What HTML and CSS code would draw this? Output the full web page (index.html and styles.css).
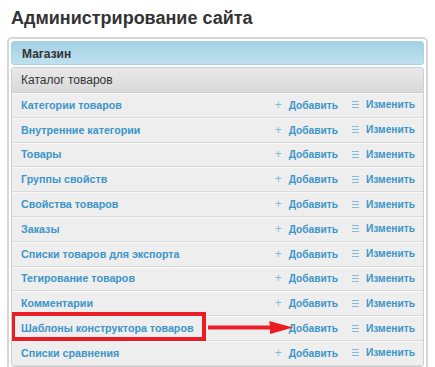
FILE: index.html
```html
<!DOCTYPE html>
<html lang="ru">
<head>
    <meta charset="UTF-8">
    <title>Администрирование сайта</title>
    <link rel="stylesheet" href="styles.css">
</head>
<body>
    <h1 class="page-title">Администрирование сайта</h1>
    <div class="panel">
        <div class="section-head">Магазин</div>
        <div class="group">
            <div class="group-head">Каталог товаров</div>
            <div class="row"><a class="name">Категории товаров</a><span class="acts"><a class="add">Добавить</a><a class="edit">Изменить</a></span></div>
            <div class="row"><a class="name">Внутренние категории</a><span class="acts"><a class="add">Добавить</a><a class="edit">Изменить</a></span></div>
            <div class="row"><a class="name">Товары</a><span class="acts"><a class="add">Добавить</a><a class="edit">Изменить</a></span></div>
            <div class="row"><a class="name">Группы свойств</a><span class="acts"><a class="add">Добавить</a><a class="edit">Изменить</a></span></div>
            <div class="row"><a class="name">Свойства товаров</a><span class="acts"><a class="add">Добавить</a><a class="edit">Изменить</a></span></div>
            <div class="row"><a class="name">Заказы</a><span class="acts"><a class="add">Добавить</a><a class="edit">Изменить</a></span></div>
            <div class="row"><a class="name">Списки товаров для экспорта</a><span class="acts"><a class="add">Добавить</a><a class="edit">Изменить</a></span></div>
            <div class="row"><a class="name">Тегирование товаров</a><span class="acts"><a class="add">Добавить</a><a class="edit">Изменить</a></span></div>
            <div class="row"><a class="name">Комментарии</a><span class="acts"><a class="add">Добавить</a><a class="edit">Изменить</a></span></div>
            <div class="row marked"><a class="name">Шаблоны конструктора товаров</a><span class="acts"><a class="add">Добавить</a><a class="edit">Изменить</a></span>
                <span class="red-box"></span>
                <svg class="red-arrow" width="90" height="16" viewBox="0 0 90 16">
                    <path d="M0 5.5 L62 5.5 L61 1 L85 7.5 L62 14 L62 9.5 L0 9.5 Z" fill="#ec1c24"/>
                </svg>
            </div>
            <div class="row"><a class="name">Списки сравнения</a><span class="acts"><a class="add">Добавить</a><a class="edit">Изменить</a></span></div>
        </div>
    </div>
</body>
</html>
```

FILE: styles.css
```css
body {
    margin: 0;
    font-family: "Liberation Sans", Arial, sans-serif;
    background: #fff;
    color: #333;
}

.page-title {
    font-size: 18px;
    font-weight: bold;
    color: #333;
    margin: 8px 11px 8px;
    line-height: 21px;
}

.panel {
    margin: 0 7px;
    border: 2px solid #d6d6d6;
    border-radius: 5px;
    padding: 2px;
    height: 400px;
}

.section-head {
    height: 24px;
    line-height: 24px;
    padding-left: 10px;
    font-size: 12px;
    font-weight: bold;
    color: #333;
    background: linear-gradient(#a3d1e4, #bfe1ef);
    border: 1px solid #a9d3e3;
    border-radius: 3px;
    box-sizing: border-box;
    margin-bottom: 2px;
}

.group {
    border: 1px solid #cfcfcf;
    border-radius: 3px;
    overflow: hidden;
}

.group-head {
    height: 24px;
    line-height: 24px;
    padding-left: 9px;
    font-size: 12px;
    color: #333;
    background: linear-gradient(#e9e9e9, #d9d9d9);
    border-bottom: 1px solid #cfcfcf;
}

.row {
    position: relative;
    display: flex;
    align-items: center;
    justify-content: space-between;
    height: 23.8px;
    padding: 0 8px 0 9px;
    background: #eeeeee;
    border-bottom: 1px solid #dadada;
    box-shadow: inset 0 1px #f9f9f9;
    font-size: 10.7px;
    font-weight: bold;
}

.row a {
    color: #3a95c8;
    text-decoration: none;
}

.acts {
    display: flex;
    align-items: center;
    font-size: 10.2px;
}

.add::before {
    content: "+";
    display: inline-block;
    color: #80bddc;
    font-weight: normal;
    font-size: 12px;
    margin-right: 7px;
}

.edit {
    margin-left: 14px;
}

.edit::before {
    content: "";
    display: inline-block;
    width: 7px;
    height: 7px;
    margin-right: 7px;
    vertical-align: 0;
    background: linear-gradient(#80bddc 0 1px, transparent 1px 3px, #80bddc 3px 4px, transparent 4px 6px, #80bddc 6px 7px);
}

.red-box {
    position: absolute;
    left: -1px;
    top: -4px;
    width: 187px;
    height: 21px;
    border: 4px solid #ec1c24;
}

.red-arrow {
    position: absolute;
    left: 196px;
    top: 4px;
}
```
